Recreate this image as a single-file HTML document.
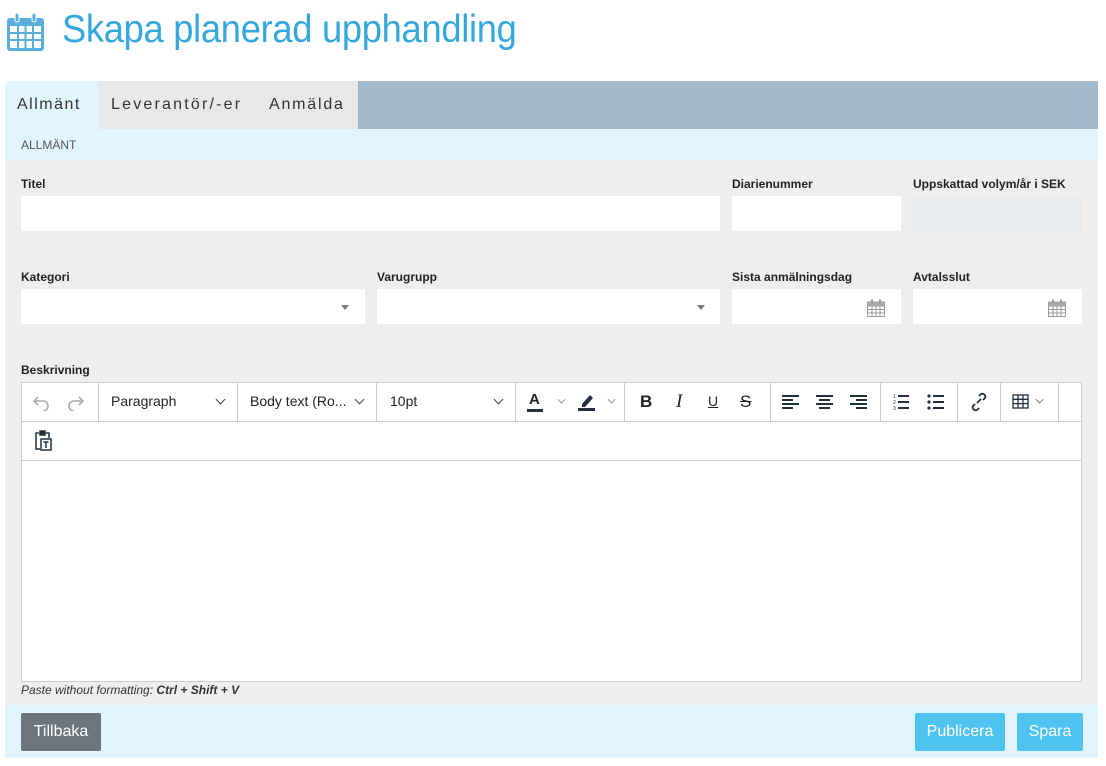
<!DOCTYPE html>
<html><head><meta charset="utf-8"><style>
*{box-sizing:border-box;margin:0;padding:0}
body{width:1106px;height:766px;background:#fff;font-family:"Liberation Sans",sans-serif;position:relative;overflow:hidden}
.a{position:absolute}
.lbl{position:absolute;font-size:12px;font-weight:bold;color:#222}
.inp{position:absolute;background:#fff;height:35px}
.sep{position:absolute;top:0;width:1px;height:39px;background:#ccc}
.tb{position:absolute;top:0;height:39px;line-height:39px;font-size:14px;color:#222}
.chev{position:absolute;top:14px;width:7px;height:7px;border-right:1.5px solid #444;border-bottom:1.5px solid #444;transform:rotate(45deg)}
.btn{position:absolute;top:713px;height:38px;line-height:38px;color:#fff;font-size:16px;text-align:center;border-radius:2px}
</style></head><body>
<svg class="a" style="left:7px;top:13px" width="37" height="38" viewBox="0 0 37 38">
<rect x="0" y="5" width="37" height="33" rx="3" fill="#5aaedc"/>
<rect x="3" y="13" width="31" height="22" fill="#fff"/>
<g fill="#5aaedc"><rect x="10" y="13" width="2" height="22"/><rect x="17.5" y="13" width="2" height="22"/><rect x="25" y="13" width="2" height="22"/><rect x="3" y="19" width="31" height="2"/><rect x="3" y="26" width="31" height="2"/></g>
<rect x="8" y="0" width="4" height="9" rx="2" fill="#5aaedc" stroke="#fff" stroke-width="1"/><rect x="25" y="0" width="4" height="9" rx="2" fill="#5aaedc" stroke="#fff" stroke-width="1"/>
</svg>
<div class="a" style="left:62px;top:8px;font-size:39px;color:#34a8dc;font-family:'Liberation Sans',sans-serif;letter-spacing:-0.3px;transform:scaleX(0.93);transform-origin:0 0;white-space:nowrap">Skapa planerad upphandling</div>

<div class="a" style="left:5px;top:81px;width:1093px;height:48px;background:#a3b9cc"></div>
<div class="a" style="left:98px;top:81px;width:260px;height:48px;background:#e8e8e8"></div>
<div class="a" style="left:5px;top:81px;width:93px;height:48px;background:#e1f5fe"></div>
<div class="a" style="left:17px;top:96px;font-size:16px;letter-spacing:1.5px;color:#333">Allmänt</div>
<div class="a" style="left:111px;top:96px;font-size:16px;letter-spacing:2.2px;color:#333">Leverantör/-er</div>
<div class="a" style="left:269px;top:96px;font-size:16px;letter-spacing:1.8px;color:#333">Anmälda</div>
<div class="a" style="left:5px;top:129px;width:1093px;height:31px;background:#e1f5fe"></div>
<div class="a" style="left:21px;top:138px;font-size:12px;color:#555">ALLMÄNT</div>
<div class="a" style="left:5px;top:160px;width:1093px;height:545px;background:#eeeeee"></div>

<div class="lbl" style="left:21px;top:177px">Titel</div>
<div class="lbl" style="left:732px;top:177px">Diarienummer</div>
<div class="lbl" style="left:913px;top:177px">Uppskattad volym/år i SEK</div>
<div class="inp" style="left:21px;top:196px;width:699px"></div>
<div class="inp" style="left:732px;top:196px;width:169px"></div>
<div class="inp" style="left:913px;top:196px;width:169px;background:#e8ebee"></div>

<div class="lbl" style="left:21px;top:270px">Kategori</div>
<div class="lbl" style="left:377px;top:270px">Varugrupp</div>
<div class="lbl" style="left:732px;top:270px">Sista anmälningsdag</div>
<div class="lbl" style="left:913px;top:270px">Avtalsslut</div>
<div class="inp" style="left:21px;top:289px;width:344px"></div>
<div class="inp" style="left:377px;top:289px;width:343px"></div>
<div class="inp" style="left:732px;top:289px;width:169px"></div>
<div class="inp" style="left:913px;top:289px;width:169px"></div>
<div class="a" style="left:341px;top:305px;border:4px solid transparent;border-top:5px solid #777"></div>
<div class="a" style="left:697px;top:305px;border:4px solid transparent;border-top:5px solid #777"></div>
<svg class="a" style="left:867px;top:299px" width="18" height="18" viewBox="0 0 18 18"><rect x="0.5" y="3" width="17" height="14.5" fill="#fff" stroke="#999"/><path d="M1 7h16M1 10.5h16M1 14h16M5 7v10M9 7v10M13 7v10" stroke="#999"/><rect x="0.5" y="3" width="17" height="4" fill="#aaa"/><rect x="4" y="0.5" width="2" height="4" fill="#999"/><rect x="12" y="0.5" width="2" height="4" fill="#999"/></svg>
<svg class="a" style="left:1048px;top:299px" width="18" height="18" viewBox="0 0 18 18"><rect x="0.5" y="3" width="17" height="14.5" fill="#fff" stroke="#999"/><path d="M1 7h16M1 10.5h16M1 14h16M5 7v10M9 7v10M13 7v10" stroke="#999"/><rect x="0.5" y="3" width="17" height="4" fill="#aaa"/><rect x="4" y="0.5" width="2" height="4" fill="#999"/><rect x="12" y="0.5" width="2" height="4" fill="#999"/></svg>

<div class="lbl" style="left:21px;top:363px">Beskrivning</div>
<div class="a" style="left:21px;top:382px;width:1061px;height:300px;background:#fff;border:1px solid #ccc"></div>
<div class="a" style="left:22px;top:421px;width:1059px;height:1px;background:#ccc"></div>
<div class="a" style="left:22px;top:460px;width:1059px;height:1px;background:#ccc"></div>
<div class="a" style="left:22px;top:382px;width:1059px;height:39px">
<svg class="a" style="left:10px;top:11px" width="18" height="18" viewBox="0 0 18 18" fill="none" stroke="#aaa" stroke-width="1.6"><path d="M6 4L2 8l4 4M2 8h9a5 5 0 010 10"/></svg>
<svg class="a" style="left:45px;top:11px" width="18" height="18" viewBox="0 0 18 18" fill="none" stroke="#aaa" stroke-width="1.6"><path d="M12 4l4 4-4 4M16 8H7a5 5 0 000 10"/></svg>
<div class="sep" style="left:76px"></div>
<div class="tb" style="left:89px">Paragraph</div><div class="chev" style="left:195px"></div>
<div class="sep" style="left:215px"></div>
<div class="tb" style="left:228px">Body text (Ro...</div><div class="chev" style="left:334px"></div>
<div class="sep" style="left:354px"></div>
<div class="tb" style="left:368px">10pt</div><div class="chev" style="left:473px"></div>
<div class="sep" style="left:493px"></div>
<div class="tb" style="left:507px;font-weight:bold;font-size:15px;top:-2px">A</div>
<div class="a" style="left:505px;top:27px;width:16px;height:3px;background:#222f3e"></div>
<div class="chev" style="left:536px;transform:rotate(45deg) scale(.8);border-color:#888"></div>
<svg class="a" style="left:556px;top:10px" width="18" height="20" viewBox="0 0 18 20"><path d="M4 12l8-9 3 3-8 9H4z" fill="#222f3e"/><rect x="0" y="16" width="17" height="3" fill="#222f3e"/></svg>
<div class="chev" style="left:586px;transform:rotate(45deg) scale(.8);border-color:#888"></div>
<div class="sep" style="left:602px"></div>
<div class="tb" style="left:618px;font-weight:bold;font-size:17px">B</div>
<div class="tb" style="left:654px;font-style:italic;font-family:'Liberation Serif',serif;font-size:19px">I</div>
<div class="tb" style="left:686px;font-size:14px;text-decoration:underline">U</div>
<div class="tb" style="left:718px;font-size:17px;text-decoration:line-through">S</div>
<div class="sep" style="left:748px"></div>
<svg class="a" style="left:760px;top:12px" width="100" height="16" viewBox="0 0 100 16" fill="#222f3e"><rect x="0" y="1" width="17" height="2"/><rect x="0" y="5" width="11" height="2"/><rect x="0" y="9" width="17" height="2"/><rect x="0" y="13" width="11" height="2"/>
<rect x="34" y="1" width="17" height="2"/><rect x="37" y="5" width="11" height="2"/><rect x="34" y="9" width="17" height="2"/><rect x="37" y="13" width="11" height="2"/>
<rect x="68" y="1" width="17" height="2"/><rect x="74" y="5" width="11" height="2"/><rect x="68" y="9" width="17" height="2"/><rect x="74" y="13" width="11" height="2"/></svg>
<div class="sep" style="left:858px"></div>
<svg class="a" style="left:871px;top:11px" width="60" height="18" viewBox="0 0 60 18" fill="#222f3e"><text x="0" y="5" font-size="5">1</text><text x="0" y="11" font-size="5">2</text><text x="0" y="17" font-size="5">3</text><rect x="5" y="2" width="11" height="2"/><rect x="5" y="8" width="11" height="2"/><rect x="5" y="14" width="11" height="2"/>
<circle cx="36" cy="3" r="1.6"/><circle cx="36" cy="9" r="1.6"/><circle cx="36" cy="15" r="1.6"/><rect x="40" y="2" width="11" height="2"/><rect x="40" y="8" width="11" height="2"/><rect x="40" y="14" width="11" height="2"/></svg>
<div class="sep" style="left:935px"></div>
<svg class="a" style="left:947px;top:10px" width="20" height="20" viewBox="0 0 20 20" fill="none" stroke="#222f3e" stroke-width="1.8"><path d="M8 11l4-4M10 4l2-2a3 3 0 014 4l-2 2M10 16l-2 2a3 3 0 01-4-4l2-2"/></svg>
<div class="sep" style="left:978px"></div>
<svg class="a" style="left:990px;top:12px" width="17" height="15" viewBox="0 0 17 15" fill="none" stroke="#222f3e" stroke-width="1.3"><rect x="1" y="1" width="15" height="13"/><path d="M1 5.3h15M1 9.6h15M6 1v13M11 1v13"/></svg>
<div class="chev" style="left:1014px;transform:rotate(45deg) scale(.8);border-color:#666"></div>
<div class="sep" style="left:1036px"></div>
</div>
<svg class="a" style="left:35px;top:430px" width="17" height="21" viewBox="0 0 17 21" fill="none" stroke="#222f3e" stroke-width="1.5"><path d="M4 3H1v16h4"/><rect x="5" y="1" width="5" height="4" fill="#222f3e"/><path d="M11 3h3v5"/><rect x="6" y="9" width="10" height="11"/><path d="M8.5 12h5M11 12v6"/></svg>

<div class="a" style="left:21px;top:683px;font-size:12px;font-style:italic;color:#333">Paste without formatting: <b>Ctrl + Shift + V</b></div>

<div class="a" style="left:5px;top:705px;width:1093px;height:53px;background:#e1f5fe"></div>
<div class="btn" style="left:21px;width:80px;background:#6c757d">Tillbaka</div>
<div class="btn" style="left:915px;width:90px;background:#4fc3f0">Publicera</div>
<div class="btn" style="left:1017px;width:66px;background:#4fc3f0">Spara</div>
</body></html>
